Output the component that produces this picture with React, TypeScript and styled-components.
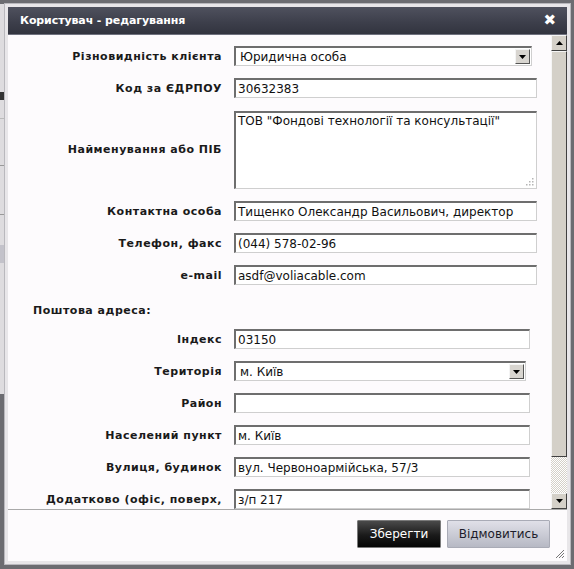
import React from "react";
import styled, { createGlobalStyle } from "styled-components";

const Global = createGlobalStyle`
  html, body { margin: 0; padding: 0; background: #6c6c71; }
  body { font-family: "DejaVu Sans", Verdana, sans-serif; }
  * { box-sizing: border-box; }
`;

const Page = styled.div`
  width: 574px;
  height: 569px;
  display: flex;
  align-items: flex-start;
  overflow: hidden;
  background: #6c6c71;
`;

const Peek = styled.div`
  width: 4px;
  height: 390px;
  margin-top: 4px;
  background: #dedcdf;
  display: flex;
  flex-direction: column;
  overflow: hidden;
`;

const PeekMark = styled.div<{ $h: number; $c: string }>`
  height: ${(p) => p.$h}px;
  flex: none;
  background: ${(p) => p.$c};
`;

const Dialog = styled.div`
  width: 567px;
  height: 562px;
  margin-top: 3px;
  background: #e8e6e9;
  border: 1px solid #b9b8bd;
  padding: 3px;
  display: flex;
  flex-direction: column;
`;

const TitleBar = styled.div`
  height: 28px;
  flex: none;
  display: flex;
  align-items: center;
  justify-content: space-between;
  padding: 0 11px 0 12px;
  background: linear-gradient(#4f515e, #3c3e4a 60%, #32343f);
  border-bottom: 1px solid #6f717e;
  color: #fff;
  font-family: "DejaVu Sans", Verdana, sans-serif;
  font-weight: bold;
  font-size: 11px;
  letter-spacing: -0.1px;
`;

const Close = styled.span`
  font-size: 15px;
  line-height: 1;
  margin-top: -1px;
`;

const Body = styled.div`
  height: 474px;
  flex: none;
  display: flex;
  background: #fdfbfd;
`;

const FormArea = styled.div`
  flex: 1;
  overflow: hidden;
  padding-top: 11px;
  display: grid;
  grid-template-columns: 214px 1fr;
  column-gap: 12px;
  row-gap: 12px;
  align-content: start;
  grid-auto-rows: min-content;
`;

const Label = styled.label`
  font-family: "DejaVu Sans", Verdana, sans-serif;
  font-weight: bold;
  font-size: 11px;
  letter-spacing: 0.5px;
  color: #1a1a1a;
  text-align: right;
  align-self: center;
  white-space: nowrap;
`;

const Section = styled.div`
  grid-column: 1 / 3;
  height: 20px;
  padding-left: 25px;
  display: flex;
  align-items: flex-end;
  font-weight: bold;
  font-size: 11px;
  letter-spacing: 0.5px;
  color: #1a1a1a;
`;

const fieldBox = `
  height: 20px;
  border-style: solid;
  border-width: 2px 1px 1px 2px;
  border-color: #6e6e6e #cfcfcf #cfcfcf #6e6e6e;
  background: #fff;
  font-family: "DejaVu Sans", Verdana, sans-serif;
  font-size: 12px;
  color: #111;
`;

const Field = styled.div<{ $w: number }>`
  ${fieldBox}
  width: ${(p) => p.$w}px;
  padding: 0 2px;
  display: flex;
  align-items: center;
  white-space: nowrap;
  overflow: hidden;
`;

const Area = styled.div`
  ${fieldBox}
  width: 303px;
  height: 78px;
  margin-top: 1px;
  padding: 1px 2px;
  position: relative;
`;

const Grip = styled.svg`
  position: absolute;
  right: 2px;
  bottom: 2px;
`;

const Select = styled.div<{ $w: number }>`
  ${fieldBox}
  width: ${(p) => p.$w}px;
  padding: 0 1px 0 4px;
  display: flex;
  align-items: center;
  justify-content: space-between;
`;

const DropBtn = styled.div`
  width: 15px;
  height: 15px;
  background: #d8d5d0;
  border-style: solid;
  border-width: 1px;
  border-color: #f4f4f4 #555 #555 #f4f4f4;
  display: flex;
  align-items: center;
  justify-content: center;
`;

const ScrollBar = styled.div`
  width: 16px;
  flex: none;
  display: flex;
  flex-direction: column;
  background-color: #f2f1ee;
  background-image: repeating-conic-gradient(#d4d0c8 0 25%, #ffffff 0 50%);
  background-size: 2px 2px;
`;

const SBtn = styled.div`
  height: 16px;
  flex: none;
  background: #d4d0c8;
  border-style: solid;
  border-width: 1px;
  border-color: #f5f5f5 #404040 #404040 #f5f5f5;
  display: flex;
  align-items: center;
  justify-content: center;
`;

const Thumb = styled.div`
  height: 406px;
  flex: none;
  background: #d4d0c8;
  border-style: solid;
  border-width: 1px;
  border-color: #f5f5f5 #404040 #404040 #f5f5f5;
`;

const Spacer = styled.div`
  flex: 1;
`;

const Footer = styled.div`
  flex: 1;
  background: #fdfbfd;
  border-top: 1px solid #a9a9a9;
  display: flex;
  justify-content: flex-end;
  align-items: flex-start;
  gap: 6px;
  padding: 10px 17px 0 0;
  position: relative;
`;

const Button = styled.button<{ $dark?: boolean }>`
  height: 28px;
  width: ${(p) => (p.$dark ? 84 : 103)}px;
  padding: 0;
  font-family: "DejaVu Sans", Verdana, sans-serif;
  font-size: 12px;
  color: ${(p) => (p.$dark ? "#fff" : "#1d1d2a")};
  background: ${(p) =>
    p.$dark
      ? "linear-gradient(#4a4a4a, #1a1a1a 55%, #050505)"
      : "linear-gradient(#e0e0e8, #c9cad4 55%, #b7b9c4)"};
  border: 1px solid ${(p) => (p.$dark ? "#7a7a7a" : "#a9abb6")};
  border-radius: 1px;
`;

const Resize = styled.svg`
  position: absolute;
  right: 2px;
  bottom: 2px;
`;

const Tri = ({ up }: { up?: boolean }) => (
  <svg width="7" height="4" viewBox="0 0 7 4">
    <polygon points={up ? "3.5,0 7,4 0,4" : "0,0 7,0 3.5,4"} fill="#000" />
  </svg>
);

type Row = { label: string; value: string; w: number; select?: boolean };

const top: Row[] = [
  { label: "Контактна особа", value: "Тищенко Олександр Васильович, директор", w: 303 },
  { label: "Телефон, факс", value: "(044) 578-02-96", w: 303 },
  { label: "e-mail", value: "asdf@voliacable.com", w: 303 },
];

const addr: Row[] = [
  { label: "Індекс", value: "03150", w: 296 },
  { label: "Територія", value: "м. Київ", w: 292, select: true },
  { label: "Район", value: "", w: 296 },
  { label: "Населений пункт", value: "м. Київ", w: 296 },
  { label: "Вулиця, будинок", value: "вул. Червоноармійська, 57/3", w: 296 },
  { label: "Додатково (офіс, поверх,", value: "з/п 217", w: 296 },
];

const renderRow = (r: Row) => (
  <React.Fragment key={r.label}>
    <Label>{r.label}</Label>
    {r.select ? (
      <Select $w={r.w}>
        {r.value}
        <DropBtn>
          <Tri />
        </DropBtn>
      </Select>
    ) : (
      <Field $w={r.w}>{r.value}</Field>
    )}
  </React.Fragment>
);

export default function App() {
  return (
    <Page>
      <Global />
      <Peek>
        <PeekMark $h={88} $c="#dedcdf" />
        <PeekMark $h={8} $c="#333" />
        <PeekMark $h={18} $c="#dedcdf" />
        <PeekMark $h={1} $c="#bbb" />
        <PeekMark $h={46} $c="#dedcdf" />
        <PeekMark $h={1} $c="#999" />
        <PeekMark $h={48} $c="#dedcdf" />
        <PeekMark $h={1} $c="#999" />
        <PeekMark $h={30} $c="#dedcdf" />
        <PeekMark $h={18} $c="#c3c2ca" />
      </Peek>
      <Dialog>
        <TitleBar>
          <span>Користувач - редагування</span>
          <Close>✖</Close>
        </TitleBar>
        <Body>
          <FormArea>
            <Label>Різновидність клієнта</Label>
            <Select $w={298}>
              Юридична особа
              <DropBtn>
                <Tri />
              </DropBtn>
            </Select>
            <Label>Код за ЄДРПОУ</Label>
            <Field $w={303}>30632383</Field>
            <Label>Найменування або ПІБ</Label>
            <Area>
              ТОВ "Фондові технології та консультації"
              <Grip width="9" height="9" viewBox="0 0 9 9">
                {[
                  [7, 1],
                  [4, 4],
                  [7, 4],
                  [1, 7],
                  [4, 7],
                  [7, 7],
                ].map(([x, y]) => (
                  <rect key={`${x}-${y}`} x={x} y={y} width="1.5" height="1.5" fill="#b5b5b5" />
                ))}
              </Grip>
            </Area>
            {top.map(renderRow)}
            <Section>Поштова адреса:</Section>
            {addr.map(renderRow)}
          </FormArea>
          <ScrollBar>
            <SBtn>
              <Tri up />
            </SBtn>
            <Thumb />
            <Spacer />
            <SBtn>
              <Tri />
            </SBtn>
          </ScrollBar>
        </Body>
        <Footer>
          <Button $dark>Зберегти</Button>
          <Button>Відмовитись</Button>
          <Resize width="11" height="11" viewBox="0 0 11 11">
            <path d="M10 2 L2 10 M10 5 L5 10 M10 8 L8 10" stroke="#777" strokeWidth="1" />
          </Resize>
        </Footer>
      </Dialog>
    </Page>
  );
}
